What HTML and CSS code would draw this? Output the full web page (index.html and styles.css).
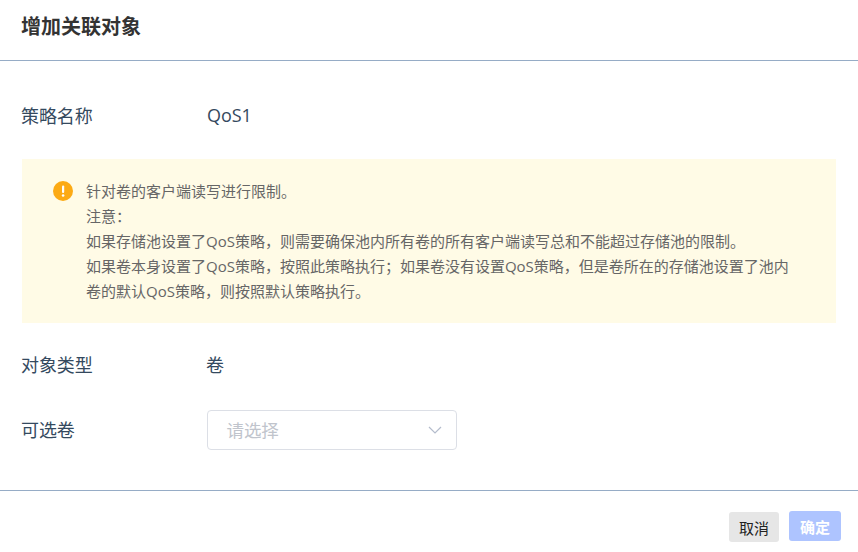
FILE: index.html
```html
<!DOCTYPE html>
<html lang="zh-CN">
<head>
  <meta charset="UTF-8">
  <title>增加关联对象</title>
  <link rel="stylesheet" href="styles.css">
</head>
<body>
  <div class="dialog">
    <div class="dialog-header">
      <h2>增加关联对象</h2>
    </div>
    <div class="dialog-body">
      <div class="form-row">
        <span class="form-label">策略名称</span>
        <span class="form-value">QoS1</span>
      </div>
      <div class="alert">
        <svg class="alert-icon" width="20" height="20" viewBox="0 0 20 20">
          <circle cx="10" cy="10" r="10" fill="#fcaa14"/>
          <rect x="9" y="4.5" width="2.2" height="7.5" rx="1" fill="#fff"/>
          <circle cx="10.1" cy="14.5" r="1.3" fill="#fff"/>
        </svg>
        <div class="alert-text">
          <p>针对卷的客户端读写进行限制。</p>
          <p>注意：</p>
          <p>如果存储池设置了QoS策略，则需要确保池内所有卷的所有客户端读写总和不能超过存储池的限制。</p>
          <p>如果卷本身设置了QoS策略，按照此策略执行；如果卷没有设置QoS策略，但是卷所在的存储池设置了池内卷的默认QoS策略，则按照默认策略执行。</p>
        </div>
      </div>
      <div class="form-row row-type">
        <span class="form-label">对象类型</span>
        <span class="form-value type-value">卷</span>
      </div>
      <div class="form-row row-select">
        <span class="form-label select-label">可选卷</span>
        <div class="select">
          <span class="select-placeholder">请选择</span>
          <svg class="select-arrow" width="14" height="8" viewBox="0 0 14 8">
            <path d="M1 1l6 6 6-6" fill="none" stroke="#b4bccc" stroke-width="1.2"/>
          </svg>
        </div>
      </div>
    </div>
    <div class="dialog-footer">
      <button type="button" class="btn btn-cancel">取消</button>
      <button type="button" class="btn btn-ok">确定</button>
    </div>
  </div>
</body>
</html>
```

FILE: styles.css
```css
* {
  box-sizing: border-box;
}

body {
  margin: 0;
  background-color: #fff;
  font-family: "Open Sans", "Noto Sans CJK SC", sans-serif;
}

.dialog {
  width: 858px;
  height: 552px;
  overflow: hidden;
}

.dialog-header {
  height: 61px;
  padding: 13px 21px 0;
  border-bottom: 1px solid #96acc6;
}

.dialog-header h2 {
  margin: 0;
  font-size: 20px;
  line-height: 28px;
  font-weight: 700;
  color: #333;
}

.dialog-body {
  height: 430px;
  padding: 34px 22px 0;
  border-bottom: 1px solid #96acc6;
}

.form-row {
  display: flex;
  align-items: center;
  height: 40px;
  margin-left: -1px;
  font-size: 18px;
  letter-spacing: -0.1px;
  color: #34495e;
}

.form-label {
  width: 186px;
  flex-shrink: 0;
}

.row-type {
  margin-top: 21px;
}

.row-select {
  margin-top: 26px;
}

.type-value {
  margin-left: -1px;
}

.select-label {
  margin-top: -2px;
}

.alert {
  display: flex;
  height: 164px;
  width: 814px;
  margin-top: 24px;
  padding: 22px 0 0 31px;
  background-color: #fffbe6;
}

.alert-icon {
  flex-shrink: 0;
}

.alert-text {
  width: 716px;
  margin: -2px 0 0 13px;
  font-size: 15px;
  line-height: 25px;
  color: #666;
}

.alert-text p {
  margin: 0;
}

.select {
  display: flex;
  align-items: center;
  justify-content: space-between;
  width: 249.5px;
  height: 40px;
  padding: 0 14px 0 18.5px;
  border: 1px solid #dcdfe6;
  border-radius: 4px;
  background-color: #fff;
}

.select-placeholder {
  margin-top: -2px;
  font-size: 17.5px;
  color: #c0c4cc;
}

.dialog-footer {
  display: flex;
  justify-content: flex-end;
  gap: 10px;
  padding: 20px 17px 0 0;
}

.btn {
  height: 30px;
  border: none;
  border-radius: 3px;
  font-family: inherit;
  font-size: 15px;
  font-weight: 700;
  padding: 0;
}

.btn-cancel {
  width: 50px;
  margin-top: 1px;
  background-color: #e6e6e6;
  color: #222;
  font-weight: 400;
}

.btn-ok {
  width: 52px;
  background-color: #aec4ff;
  color: #fff;
}
```
